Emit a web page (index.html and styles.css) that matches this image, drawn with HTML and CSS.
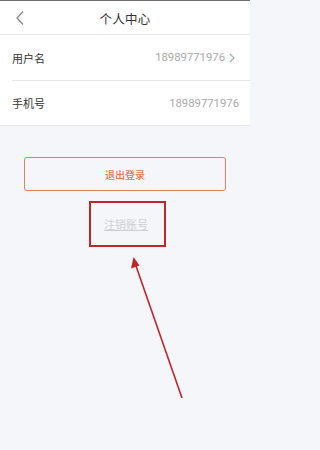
FILE: index.html
```html
<!DOCTYPE html>
<html lang="zh">
<head>
<meta charset="utf-8">
<link rel="stylesheet" href="styles.css">
</head>
<body>
<div class="page">
  <header class="topbar">
    <svg class="back" width="10" height="16" viewBox="0 0 10 16"><path d="M8 1.5 L2 8 L8 14.5" fill="none" stroke="#888" stroke-width="1.3"/></svg>
    <div class="title">个人中心</div>
  </header>
  <section class="list">
    <div class="row">
      <span class="label">用户名</span>
      <span class="value">18989771976<svg class="chev" width="6" height="10" viewBox="0 0 6 10"><path d="M1 1 L5 5 L1 9" fill="none" stroke="#aaa" stroke-width="1.1"/></svg></span>
    </div>
    <div class="row">
      <span class="label">手机号</span>
      <span class="value last">18989771976</span>
    </div>
  </section>
  <button class="logout">退出登录</button>
  <div class="cancel-wrap">
    <div class="mark-box"><a class="cancel">注销账号</a></div>
  </div>
  <svg class="arrow" width="250" height="450" viewBox="0 0 250 450">
    <line x1="182" y1="398" x2="136" y2="266" stroke="#c3242b" stroke-width="1.6"/>
    <polygon points="133.5,257 131,268.5 139.5,265.5" fill="#c3242b"/>
  </svg>
</div>
</body>
</html>
```
FILE: styles.css
```css
html, body {
  margin: 0;
  padding: 0;
  background: #f5f6fa;
}
body {
  font-family: "Noto Sans CJK SC", "Noto Sans", sans-serif;
  width: 250px;
  height: 450px;
  overflow: hidden;
}
.page {
  position: relative;
  width: 250px;
  height: 450px;
  border-top: 1px solid #6f6f6f;
  box-sizing: border-box;
}
.topbar {
  position: relative;
  height: 33px;
  background: #fff;
  border-bottom: 1px solid #e6e6e6;
  display: flex;
  align-items: center;
  justify-content: center;
}
.back {
  position: absolute;
  left: 15px;
  top: 9px;
}
.title {
  font-size: 12.5px;
  color: #333;
  letter-spacing: 0.2px;
  margin-top: 2px;
}
.list {
  background: #fff;
  border-bottom: 1px solid #e6e6e6;
  padding-left: 12px;
}
.row {
  height: 45px;
  display: flex;
  align-items: center;
  justify-content: space-between;
  padding-right: 11px;
}
.row + .row {
  border-top: 1px solid #e6e6e6;
  height: 44px;
}
.label {
  font-size: 11px;
  color: #333;
}
.value {
  font-family: "Roboto", "Noto Sans", sans-serif;
  font-size: 11.3px;
  color: #aaa;
  display: flex;
  align-items: center;
  margin-right: 4px;
}
.value.last {
  margin-right: 0;
}
.chev {
  margin-left: 4px;
}
.logout {
  display: block;
  margin: 31px 24px 0;
  width: 202px;
  height: 34px;
  border: 1px solid #e3805f;
  border-radius: 3px;
  background: transparent;
  color: #e07552;
  font-family: "Noto Sans CJK SC", sans-serif;
  font-size: 10px;
  font-weight: 500;
  padding: 0;
}
.cancel-wrap {
  display: flex;
  padding-left: 89px;
  margin-top: 10px;
}
.mark-box {
  width: 73px;
  height: 42px;
  border: 2px solid #c0252c;
  display: flex;
  align-items: center;
  justify-content: center;
}
.cancel {
  font-size: 11px;
  color: #cfcfd3;
  text-decoration: underline;
  margin-left: -3px;
}
.arrow {
  position: absolute;
  left: 0;
  top: -1px;
}
```
